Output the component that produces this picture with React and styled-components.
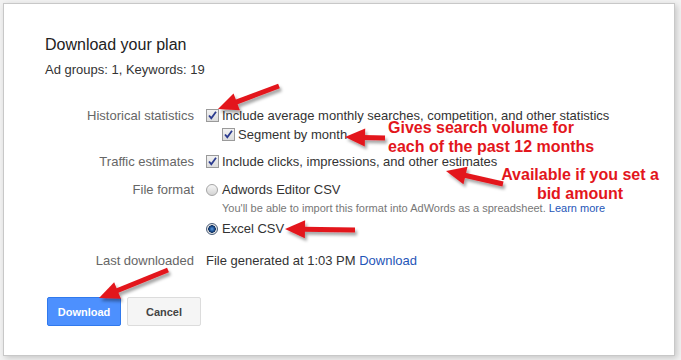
import styled, { createGlobalStyle } from 'styled-components';

const GlobalStyle = createGlobalStyle`
  html, body {
    margin: 0;
    padding: 0;
    background: #f2f2f2;
  }
  body {
    font-family: "Liberation Sans", Arial, sans-serif;
    font-size: 13px;
    color: #333;
  }
`

const RED = '#e3161c'

// arrows drawn over the dialog: [tailX, tailY, tipX, tipY]
const arrows = [
  [279, 86, 218, 109],
  [385, 138, 345, 137],
  [503, 184, 446, 171],
  [355, 230, 285, 229],
  [168, 270, 99, 298],
]

function Arrow({ x1, y1, x2, y2 }) {
  const dx = x1 - x2
  const dy = y1 - y2
  const len = Math.sqrt(dx * dx + dy * dy)
  const ux = dx / len
  const uy = dy / len
  const L = 20
  const W = 9
  const bx = x2 + ux * L
  const by = y2 + uy * L
  const head = [
    `${x2},${y2}`,
    `${bx - uy * W},${by + ux * W}`,
    `${bx + uy * W},${by - ux * W}`,
  ].join(' ')
  return (
    <g filter="url(#arrowShadow)">
      <line x1={x1} y1={y1} x2={bx + ux * -2} y2={by + uy * -2} stroke={RED} strokeWidth="5" />
      <polygon points={head} fill={RED} />
    </g>
  )
}

function Checkbox() {
  return (
    <Box>
      <svg width="11" height="11" viewBox="0 0 11 11">
        <path d="M2 5.5 L4.3 8.2 L9 1.8" fill="none" stroke="#2b3b8f" strokeWidth="1.8" />
      </svg>
    </Box>
  )
}

function App() {
  return (
    <Page>
      <GlobalStyle />
      <Dialog>
        <Title>Download your plan</Title>
        <Summary>Ad groups: 1, Keywords: 19</Summary>

        <Form>
          <Row $top={28}>
            <Label>Historical statistics</Label>
            <Value>
              <Option><Checkbox />Include average monthly searches, competition, and other statistics</Option>
              <Option $indent><Checkbox />Segment by month</Option>
            </Value>
          </Row>

          <Row $top={8}>
            <Label>Traffic estimates</Label>
            <Value>
              <Option><Checkbox />Include clicks, impressions, and other estimates</Option>
            </Value>
          </Row>

          <Row $top={9}>
            <Label>File format</Label>
            <Value>
              <Option><Radio />Adwords Editor CSV</Option>
              <Hint>You'll be able to import this format into AdWords as a spreadsheet. <Link>Learn more</Link></Hint>
              <Option $top={4}><Radio $checked />Excel CSV</Option>
            </Value>
          </Row>

          <Row $top={13}>
            <Label>Last downloaded</Label>
            <Value>
              <Option>File generated at 1:03 PM&nbsp;<Link>Download</Link></Option>
            </Value>
          </Row>
        </Form>

        <Buttons>
          <Button $primary>Download</Button>
          <Button>Cancel</Button>
        </Buttons>
      </Dialog>

      <Overlay width="681" height="360" viewBox="0 0 681 360">
        <defs>
          <filter id="arrowShadow" x="-20%" y="-50%" width="140%" height="200%">
            <feDropShadow dx="2" dy="3" stdDeviation="1.6" floodColor="#000" floodOpacity="0.35" />
          </filter>
        </defs>
        {arrows.map((a, i) =>
          <Arrow key={i} x1={a[0]} y1={a[1]} x2={a[2]} y2={a[3]} />
        )}
      </Overlay>

      <Note style={{ left: 388, top: 118 }}>
        Gives search volume for<br />each of the past 12 months
      </Note>
      <Note $center style={{ left: 580, top: 165 }}>
        Available if you set a<br />bid amount
      </Note>
    </Page>
  );
}

const Page = styled.div`
  position: relative;
  width: 681px;
  height: 360px;
  padding: 3px 0 0 3px;
  box-sizing: border-box;
  overflow: hidden;
`

const Dialog = styled.div`
  box-sizing: border-box;
  width: 672px;
  height: 353px;
  padding: 31px 41px 0 41px;
  background: #fff;
  border: 1px solid #c8c8c8;
  box-shadow: 2px 2px 6px rgba(0, 0, 0, 0.18);
`

const Title = styled.div`
  font-size: 16px;
  line-height: 20px;
  color: #222;
`

const Summary = styled.div`
  margin-top: 7px;
  line-height: 16px;
  color: #333;
`

const Form = styled.div`
  display: flex;
  flex-direction: column;
`

const Row = styled.div`
  display: grid;
  grid-template-columns: 149px 1fr;
  column-gap: 12px;
  margin-top: ${p => p.$top || 0}px;
`

const Label = styled.div`
  text-align: right;
  line-height: 19px;
  color: #666;
  white-space: nowrap;
`

const Value = styled.div`
  display: flex;
  flex-direction: column;
`

const Option = styled.div`
  display: flex;
  align-items: center;
  height: 19px;
  white-space: nowrap;
  color: #333;
  padding-left: ${p => p.$indent ? 16 : 0}px;
  margin-top: ${p => p.$top || 0}px;
`

const Box = styled.span`
  box-sizing: border-box;
  width: 13px;
  height: 13px;
  margin-right: 3px;
  border: 1px solid #9a9a9a;
  background: linear-gradient(#f2f2f2, #dcdcdc);
  display: inline-flex;
  align-items: center;
  justify-content: center;
`

const Radio = styled.span`
  box-sizing: border-box;
  width: 12px;
  height: 12px;
  margin-right: 4px;
  border-radius: 50%;
  border: 1px solid ${p => p.$checked ? '#4a5d78' : '#a5a5a5'};
  background: ${p => p.$checked
    ? 'radial-gradient(circle at 50% 50%, #5d9be0 0, #1a4c8c 2.5px, #0b2c5c 3.5px, #e4e4e4 4px)'
    : 'linear-gradient(#f6f6f6, #d4d4d4)'};
`

const Hint = styled.div`
  margin-top: 2px;
  padding-left: 16px;
  font-size: 11px;
  line-height: 14px;
  color: #777;
  white-space: nowrap;
`

const Link = styled.span`
  color: #1f56b8;
`

const Buttons = styled.div`
  display: flex;
  gap: 6px;
  margin-top: 27px;
  padding-left: 2px;
`

const Button = styled.div`
  box-sizing: border-box;
  width: 74px;
  height: 29px;
  display: flex;
  align-items: center;
  justify-content: center;
  border-radius: 2px;
  font-size: 11px;
  font-weight: bold;
  color: ${p => p.$primary ? '#fff' : '#444'};
  background: ${p => p.$primary ? '#4d90fe' : '#f5f5f5'};
  border: 1px solid ${p => p.$primary ? '#3079ed' : '#dcdcdc'};
`

const Overlay = styled.svg`
  position: absolute;
  left: 0;
  top: 0;
  pointer-events: none;
`

const Note = styled.div`
  position: absolute;
  font-size: 16px;
  font-weight: bold;
  line-height: 19px;
  color: ${RED};
  white-space: nowrap;
  text-align: ${p => p.$center ? 'center' : 'left'};
  transform: ${p => p.$center ? 'translateX(-50%)' : 'none'};
`

export default App;
